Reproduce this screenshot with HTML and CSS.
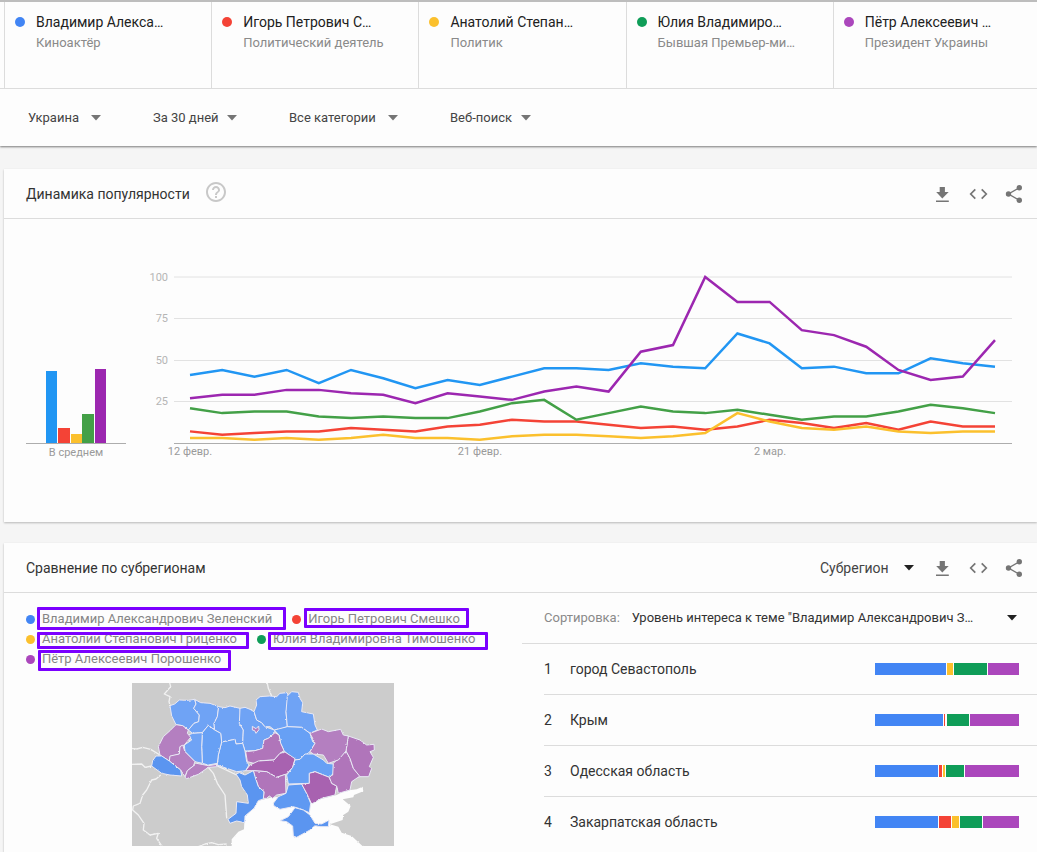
FILE: index.html
```html
<!DOCTYPE html>
<html lang="ru">
<head>
<meta charset="utf-8">
<title>Динамика популярности</title>
<link rel="stylesheet" href="styles.css">
</head>
<body>
<svg class="defs" width="0" height="0" aria-hidden="true">
  <symbol id="arrow" viewBox="0 0 10 6"><path d="M0 0h10L5 5.5z"/></symbol>
  <symbol id="download" viewBox="0 0 24 24"><path d="M9.7 5h5.2v5h3.8l-6.4 6.5L6.2 10h3.5zM6 18.5h12.8v1.6H6z"/></symbol>
  <symbol id="code" viewBox="0 0 24 24"><path d="M9.3 7.3 4.7 12l4.6 4.7M15.7 7.3l4.6 4.7-4.6 4.7" fill="none" stroke="currentColor" stroke-width="1.7"/></symbol>
  <symbol id="share" viewBox="0 0 24 24"><path d="M17.3 5.7 6.5 12l10.8 6.3" fill="none" stroke="currentColor" stroke-width="1.4"/><circle cx="17.3" cy="5.7" r="2.7"/><circle cx="6.5" cy="12" r="2.7"/><circle cx="17.3" cy="18.3" r="2.7"/></symbol>
</svg>

<header class="top">
  <ul class="terms">
    <li class="term"><span class="dot blue"></span><div class="term-text"><div class="term-name">Владимир Алекса…</div><div class="term-kind">Киноактёр</div></div></li>
    <li class="term"><span class="dot red"></span><div class="term-text"><div class="term-name">Игорь Петрович С…</div><div class="term-kind">Политический деятель</div></div></li>
    <li class="term"><span class="dot yellow"></span><div class="term-text"><div class="term-name">Анатолий Степан…</div><div class="term-kind">Политик</div></div></li>
    <li class="term"><span class="dot green"></span><div class="term-text"><div class="term-name">Юлия Владимиро…</div><div class="term-kind">Бывшая Премьер-ми…</div></div></li>
    <li class="term"><span class="dot purple"></span><div class="term-text"><div class="term-name">Пётр Алексеевич …</div><div class="term-kind">Президент Украины</div></div></li>
  </ul>
  <div class="filters">
    <label class="pick wide"><select aria-label="Регион"><option>Украина</option></select><svg class="arrow"><use href="#arrow"/></svg></label>
    <label class="pick"><select aria-label="Период"><option>За 30 дней</option></select><svg class="arrow"><use href="#arrow"/></svg></label>
    <label class="pick wide"><select aria-label="Категория"><option>Все категории</option></select><svg class="arrow"><use href="#arrow"/></svg></label>
    <label class="pick"><select aria-label="Тип поиска"><option>Веб-поиск</option></select><svg class="arrow"><use href="#arrow"/></svg></label>
  </div>
</header>

<main>
  <section class="card">
    <div class="card-head">
      <h2>Динамика популярности</h2>
      <button class="help" aria-label="Справка"><svg viewBox="0 0 24 24"><path d="M11 18h2v-2h-2v2zm1-16C6.480 2 2 6.480 2 12s4.480 10 10 10 10-4.480 10-10S17.520 2 12 2zm0 18c-4.410 0-8-3.590-8-8s3.590-8 8-8 8 3.590 8 8-3.590 8-8 8zm0-14c-2.210 0-4 1.790-4 4h2c0-1.100.9-2 2-2s2 .9 2 2c0 2-3 1.750-3 5h2c0-2.250 3-2.500 3-5 0-2.210-1.790-4-4-4z"/></svg></button>
      <div class="tools">
        <button aria-label="Скачать"><svg><use href="#download"/></svg></button>
        <button aria-label="Встроить"><svg><use href="#code"/></svg></button>
        <button aria-label="Поделиться"><svg><use href="#share"/></svg></button>
      </div>
    </div>
    <div class="trend">
      <svg class="average" viewBox="0 0 100 190" role="img" aria-label="В среднем">
        <path fill="#2196f3" d="M20 101h11v72H20z"/>
        <path fill="#f44336" d="M32 158h12v15H32z"/>
        <path fill="#fbc02d" d="M45 164h11v9H45z"/>
        <path fill="#43a047" d="M56 144h12v29H56z"/>
        <path fill="#9c27b0" d="M69 99h11v74H69z"/>
        <path class="axis" d="M0 173.500h100"/>
        <text class="tick dark" x="50" y="186" text-anchor="middle">В среднем</text>
      </svg>
      <svg class="lines" viewBox="0 0 864 190" role="img" aria-label="График популярности за 30 дней">
        <path class="grid" d="M26 7h838M26 48.500h838M26 90.500h838M26 131.500h838"/>
        <path class="axis" d="M26 173.500h838"/>
        <g class="tick" text-anchor="end">
          <text x="20" y="11">100</text><text x="20" y="52">75</text><text x="20" y="94">50</text><text x="20" y="135">25</text>
        </g>
        <g class="tick dark" text-anchor="middle">
          <text x="42" y="185">12 февр.</text><text x="332" y="185">21 февр.</text><text x="622" y="185">2 мар.</text>
        </g>
        <!-- x: day index, y: interest 0-100 -->
        <g class="series" transform="translate(42 173) scale(32.2 -1.66)">
          <polyline stroke="#f44336" points="0,7 1,5 2,6 3,7 4,7 5,9 6,8 7,7 8,10 9,11 10,14 11,13 12,13 13,11 14,9 15,10 16,8 17,10 18,14 19,12 20,9 21,12 22,8 23,13 24,10 25,10"/>
          <polyline stroke="#fbc02d" points="0,3 1,3 2,2 3,3 4,2 5,3 6,5 7,3 8,3 9,2 10,4 11,5 12,5 13,4 14,3 15,4 16,6 17,18 18,13 19,9 20,8 21,10 22,7 23,6 24,7 25,7"/>
          <polyline stroke="#43a047" points="0,21 1,18 2,19 3,19 4,16 5,15 6,16 7,15 8,15 9,19 10,24 11,26 12,14 13,18 14,22 15,19 16,18 17,20 18,17 19,14 20,16 21,16 22,19 23,23 24,21 25,18"/>
          <polyline stroke="#2196f3" points="0,41 1,44 2,40 3,44 4,36 5,44 6,39 7,33 8,38 9,35 10,40 11,45 12,45 13,44 14,48 15,46 16,45 17,66 18,60 19,45 20,46 21,42 22,42 23,51 24,48 25,46"/>
          <polyline stroke="#9c27b0" points="0,27 1,29 2,29 3,32 4,32 5,30 6,29 7,24 8,30 9,28 10,26 11,31 12,34 13,31 14,55 15,59 16,100 17,85 18,85 19,68 20,65 21,58 22,44 23,38 24,40 25,62"/>
        </g>
      </svg>
    </div>
  </section>

  <section class="card">
    <div class="card-head">
      <h2>Сравнение по субрегионам</h2>
      <div class="tools">
        <label class="pick sub"><select aria-label="Уровень"><option>Субрегион</option></select><svg class="arrow"><use href="#arrow"/></svg></label>
        <button aria-label="Скачать"><svg><use href="#download"/></svg></button>
        <button aria-label="Встроить"><svg><use href="#code"/></svg></button>
        <button aria-label="Поделиться"><svg><use href="#share"/></svg></button>
      </div>
    </div>
    <div class="regions">
      <div class="map-side">
        <div class="legend">
          <div class="legend-row">
            <span class="key"><span class="dot blue"></span><span class="mark m1">Владимир Александрович Зеленский</span></span>
            <span class="key"><span class="dot red"></span><span class="mark m2">Игорь Петрович Смешко</span></span>
          </div>
          <div class="legend-row">
            <span class="key"><span class="dot yellow"></span><span class="mark m3">Анатолий Степанович Гриценко</span></span>
            <span class="key"><span class="dot green"></span><span class="mark m4">Юлия Владимировна Тимошенко</span></span>
          </div>
          <div class="legend-row">
            <span class="key"><span class="dot purple"></span><span class="mark m5">Пётр Алексеевич Порошенко</span></span>
          </div>
        </div>
        <svg class="map" viewBox="6 9 786 489" role="img" aria-label="Карта Украины">
          <defs>
            <filter id="coast" x="-5%" y="-5%" width="110%" height="110%" color-interpolation-filters="sRGB">
              <feTurbulence type="fractalNoise" baseFrequency="0.25" numOctaves="2" seed="4"/>
              <feDisplacementMap in="SourceGraphic" scale="6" xChannelSelector="R" yChannelSelector="G"/>
            </filter>
          </defs>
          <path fill="#cccccc" d="M6 9h786v489H6z"/>
          <g filter="url(#coast)">
            <path fill="#fdfdfd" d="M305 505V478L325 455 342 448 344 405 372 380 385 362 428 352 470 350 540 365 620 345 645 332 680 328 698 320 700 334 672 345 670 352 638 358 662 378 655 395 640 405 638 420 600 433 625 440 635 458 665 468 705 505z"/>
            <g class="borders">
              <path d="M118 5 122 20 103 42 120 50 117 65 120 77M0 205 20 207 38 202 62 208 90 225M0 253 35 252 45 262 65 258M92 285 78 297 65 300 50 330 38 345 30 370 10 378 8 390 25 405 42 430 40 450 60 465 85 460 80 475 90 490 100 505M235 262 250 280 262 310 285 345 288 385 290 415M262 258 285 268 320 285M205 500 225 492 245 488 265 494 290 492M411 5 415 25 425 48M662 310 672 292 690 290"/>
            </g>
            <g class="oblast">
              <path fill="#6fa3f5" d="M120 77 134 72 148 60 175 61 194 58 198 72 191 85 208 105 206 125 192 130 175 150 158 137 138 134 125 108z"/>
              <path fill="#6fa3f5" d="M194 58 212 68 240 70 266 80 262 110 252 130 254 150 235 136 217 158 188 160 175 150 192 130 206 125 208 105 191 85 198 72z"/>
              <path fill="#6fa3f5" d="M266 80 285 83 300 78 330 85 332 110 328 130 340 150 338 190 318 192 315 178 275 186 272 160 254 150 252 130 262 110z"/>
              <path fill="#6fa3f5" d="M330 85 345 82 360 88 372 95 380 120 395 128 405 140 433 150 435 158 415 175 402 180 398 205 375 212 345 213 338 190 340 150 328 130z"/>
              <path fill="#6fa3f5" d="M372 95 380 75 378 60 390 50 418 48 440 50 450 40 472 38 478 60 468 95 472 140 450 148 433 150 420 140 405 140 395 128 380 120z"/>
              <path fill="#6fa3f5" d="M472 48 485 35 505 37 510 55 518 68 515 95 550 102 555 135 562 150 540 160 515 142 472 140 468 95z"/>
              <path fill="#67a0f5" d="M433 150 472 140 515 142 540 160 548 185 555 190 540 215 510 238 490 240 462 212 452 190 447 165z"/>
              <path fill="#67a0f5" d="M275 186 315 178 318 192 338 190 345 213 350 245 357 255 347 272 320 275 290 265 262 255 265 225z"/>
              <path fill="#67a0f5" d="M217 158 235 136 254 150 272 160 275 186 265 225 262 250 235 255 217 250 215 200z"/>
              <path fill="#6fa3f5" d="M188 160 217 158 215 200 217 250 195 245 165 215 163 195 185 180 175 165z"/>
              <path fill="#b47fc0" d="M138 134 158 137 175 150 172 160 182 172 163 195 150 200 148 222 120 230 118 243 90 225 85 200 100 170 120 152z"/>
              <path fill="#b47fc0" d="M150 200 158 195 165 215 195 245 190 258 172 272 165 290 152 270 118 243 120 228 148 222z"/>
              <path fill="#b47fc0" d="M165 292 172 272 190 258 200 250 235 257 262 253 262 260 235 262 205 283 170 296z"/>
              <path fill="#5b95f0" d="M78 228 95 228 118 243 152 270 155 288 120 285 95 280 65 258 68 242z"/>
              <path fill="#b075ba" d="M435 158 447 165 452 190 462 212 450 220 432 240 390 242 380 252 352 245 347 215 375 212 398 205 402 180 415 175z"/>
              <path fill="#a862b0" d="M347 272 360 255 385 243 432 240 450 220 465 216 495 236 488 262 470 282 440 292 410 275 370 272z"/>
              <path fill="#b075ba" d="M370 272 410 275 440 292 466 283 468 340 440 345 428 355 418 348 410 355 400 355 402 335 385 320 375 290z"/>
              <path fill="#5b95f0" d="M328 278 345 285 370 272 375 290 385 320 402 335 400 357 385 362 372 385 345 408 344 428 320 423 300 430 294 418 318 400 320 365 355 370 352 345 335 320 330 300 318 282z"/>
              <path fill="#5f99f2" d="M430 370 445 350 468 340 475 315 515 312 530 340 542 370 538 398 515 388 490 380 450 388 432 378z"/>
              <path fill="#5b95f0" d="M450 422 475 410 495 383 520 390 540 405 555 430 575 432 597 420 595 440 570 440 555 437 540 450 500 472 490 468 488 438 470 425z"/>
              <path fill="#67a0f5" d="M470 285 488 262 495 240 510 238 525 222 550 222 580 240 590 250 610 252 610 280 598 292 555 275 538 280 538 310 475 312z"/>
              <path fill="#a862b0" d="M515 312 538 310 538 280 555 275 598 292 605 310 620 318 615 345 575 355 545 372 530 340z"/>
              <path fill="#b075ba" d="M610 250 620 240 648 213 660 235 670 265 690 288 665 305 660 330 625 340 620 318 605 310 598 292 608 285z"/>
              <path fill="#b075ba" d="M655 168 690 180 710 195 732 193 733 210 720 215 730 232 718 260 725 265 716 290 690 290 670 265 660 235 648 213z"/>
              <path fill="#b47fc0" d="M540 160 575 147 595 155 632 148 640 165 655 168 648 213 625 240 595 250 580 225 550 222 540 215 555 190 548 175z"/>
            </g>
          </g>
          <path class="oblast" fill="#b47fc0" d="M367 139 378 146 386 138 387 149 378 160 374 152 367 150z"/>
        </svg>
      </div>
      <div class="list-side">
        <label class="sort"><span class="sort-label">Сортировка:</span><select><option>Уровень интереса к теме "Владимир Александрович З…</option></select><svg class="arrow"><use href="#arrow"/></svg></label>
        <ol class="rank">
          <li><span class="num">1</span><span class="place">город Севастополь</span><span class="bar"><i class="blue" style="flex-grow:71"></i><i class="yellow" style="flex-grow:6"></i><i class="green" style="flex-grow:33"></i><i class="purple" style="flex-grow:31"></i></span></li>
          <li><span class="num">2</span><span class="place">Крым</span><span class="bar"><i class="blue" style="flex-grow:68"></i><i class="red" style="flex-grow:1"></i><i class="yellow" style="flex-grow:0"></i><i class="green" style="flex-grow:22"></i><i class="purple" style="flex-grow:49"></i></span></li>
          <li><span class="num">3</span><span class="place">Одесская область</span><span class="bar"><i class="blue" style="flex-grow:63"></i><i class="red" style="flex-grow:3"></i><i class="yellow" style="flex-grow:2"></i><i class="green" style="flex-grow:18"></i><i class="purple" style="flex-grow:54"></i></span></li>
          <li><span class="num">4</span><span class="place">Закарпатская область</span><span class="bar"><i class="blue" style="flex-grow:63"></i><i class="red" style="flex-grow:12"></i><i class="yellow" style="flex-grow:7"></i><i class="green" style="flex-grow:22"></i><i class="purple" style="flex-grow:36"></i></span></li>
        </ol>
      </div>
    </div>
  </section>
</main>
</body>
</html>
```

FILE: styles.css
```css
* { box-sizing: border-box; }
body { margin: 0; background: #f5f5f5; color: #333; font: 14px/20px Roboto, "Noto Sans", sans-serif; overflow-x: hidden; }
ul, ol { list-style: none; margin: 0; padding: 0; }
h2 { margin: 0; font-size: 14px; font-weight: 400; color: #333; }
button { border: 0; padding: 0; background: none; color: inherit; cursor: pointer; }
select { appearance: none; border: 0; padding: 0; margin: 0; background: none; font: inherit; color: inherit; cursor: pointer; }
.defs { position: absolute; }

.blue { background: #4285f4; }
.red { background: #f44336; }
.yellow { background: #fbc02d; }
.green { background: #0f9d58; }
.purple { background: #ab47bc; }
.dot { flex: none; width: 10px; height: 10px; border-radius: 50%; }

.top { background: #fdfdfd; border-top: 2px solid #bdbdbd; box-shadow: 0 1px 2px rgba(0, 0, 0, .5); }
.terms { display: grid; grid-template-columns: repeat(5, 1fr); padding-left: 4px; margin-right: -3px; border-bottom: 1px solid #dcdcdc; }
.term { display: flex; gap: 11px; height: 86px; padding: 10px 10px; border-left: 1px solid #dcdcdc; }
.term .dot { margin-top: 5px; }
.term-text { min-width: 0; white-space: nowrap; }
.term-name { font-size: 14px; line-height: 20px; color: #212121; }
.term-kind { font-size: 13px; line-height: 22px; color: #8a8a8a; }

.filters { display: flex; gap: 52px; align-items: center; height: 57px; padding-left: 28px; color: #444; }
.pick { display: flex; align-items: center; gap: 8px; font-size: 13px; }
.pick.wide { gap: 12px; }
.arrow { flex: none; width: 10px; height: 6px; fill: #757575; }

.card { margin: 23px 0 0 4px; background: #fdfdfd; box-shadow: 0 1px 2px rgba(0, 0, 0, .25); }
.card + .card { margin-top: 21px; }
.card-head { display: flex; align-items: center; height: 50px; padding: 0 11px 0 22px; border-bottom: 1px solid #dcdcdc; }
.help { display: flex; margin: 0 0 4px 14px; fill: #c8c8c8; }
.help svg { width: 24px; height: 24px; }
.tools { display: flex; align-items: center; gap: 12px; margin-left: auto; color: #757575; }
.tools button { display: flex; }
.tools button svg { width: 24px; height: 24px; fill: currentColor; }
.pick.sub { gap: 15px; margin-right: 4px; color: #444; font-size: 14px; }
.sub .arrow, .sort .arrow { fill: #212121; }

.trend { display: flex; gap: 22px; align-items: flex-start; padding: 51px 25px 62px 22px; }
.average { flex: none; width: 100px; height: 190px; }
.lines { flex: 1; min-width: 0; }
.grid { stroke: #e2e2e2; fill: none; }
.axis { stroke: #adadad; fill: none; }
.tick { font-size: 11px; fill: #b5b5b5; }
.tick.dark { fill: #9a9a9a; }
.series polyline { fill: none; stroke-width: 2.5px; vector-effect: non-scaling-stroke; }

.regions { display: grid; grid-template-columns: 518px 1fr; }
.map-side { display: flex; flex-direction: column; padding: 16px 0 6px 22px; }
.legend { color: #858585; font-size: 13px; }
.legend-row { display: flex; gap: 20px; height: 20px; align-items: center; white-space: nowrap; }
.key { display: flex; align-items: center; gap: 7px; }
.key .dot { width: 9px; height: 9px; }
.mark { position: relative; }
.mark::after { content: ""; position: absolute; border: 3px solid #7b00ff; border-radius: 1px; }
.m1::after { inset: -2px -14px -1px -5px; }
.m2::after { inset: -1px -9px 1px -4px; }
.m3::after { inset: 3px -12px 0 -5px; }
.m4::after { inset: 3px -12px -1px -5px; }
.m5::after { inset: 1px -10px -2px -4px; }
.map { width: 262px; height: 163px; margin: 14px 0 0 106px; }
.borders { fill: none; stroke: #f2f2f2; stroke-width: 4px; stroke-linejoin: round; }
.oblast { stroke: #e8e8f4; stroke-width: 3px; stroke-linejoin: round; }

.sort { display: flex; align-items: center; height: 51px; padding: 0 20px 0 22px; border-bottom: 1px solid #dcdcdc; font-size: 13px; }
.sort-label { color: #8a8a8a; margin-right: 12px; }
.sort select { flex: 1; min-width: 0; }
.rank { padding-left: 22px; }
.rank li { display: flex; align-items: center; height: 51px; padding-right: 18px; border-bottom: 1px solid #dcdcdc; font-size: 14px; }
.rank li:last-child { height: 49px; border-bottom: 0; }
.num { width: 26px; }
.place { flex: 1; }
.bar { display: flex; gap: 1px; width: 144px; height: 12px; }
.bar i { flex: 0 1 0; }
```
